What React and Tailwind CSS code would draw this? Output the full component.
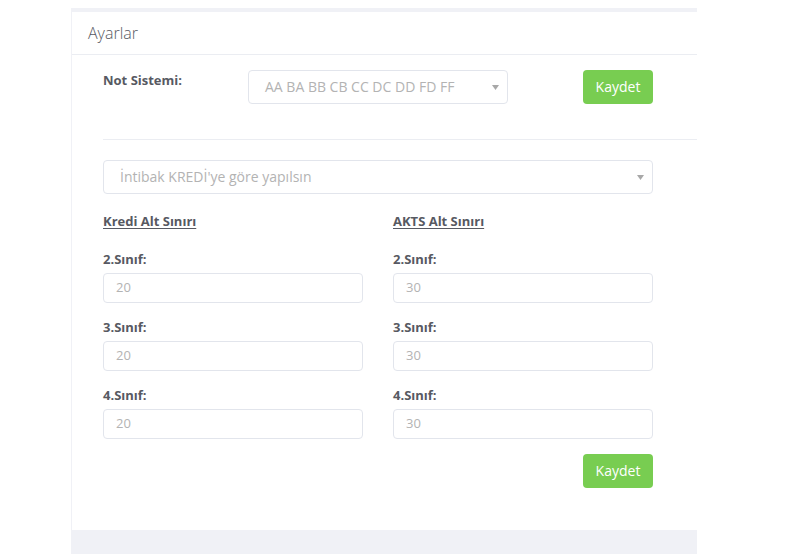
import React from "react";

const font = { fontFamily: '"Open Sans", "Noto Sans", sans-serif' };

function Arrow() {
  return (
    <svg width="7" height="5" viewBox="0 0 7 5" className="shrink-0">
      <path d="M0 0 L7 0 L3.5 5 Z" fill="#a8a8a8" />
    </svg>
  );
}

function Select({ text, className }) {
  return (
    <div
      className={`flex items-center justify-between h-[34px] border border-[#e2e5ec] rounded-[4px] pl-[16px] pr-[8px] ${className}`}
    >
      <span className="text-[14px] text-[#b3b3b3] leading-none">{text}</span>
      <Arrow />
    </div>
  );
}

function Button() {
  return (
    <div className="w-[70px] h-[34px] rounded-[4px] bg-[#78cd51] flex items-center justify-center text-white text-[14px] leading-none">
      Kaydet
    </div>
  );
}

function Field({ label, value }) {
  return (
    <div className="flex flex-col">
      <div className="text-[13px] font-bold text-[#575962] leading-[18px]">{label}</div>
      <div className="mt-[5px] h-[30px] border border-[#e2e5ec] rounded-[4px] flex items-center pl-[12px] text-[13px] text-[#b3b3b3]">
        {value}
      </div>
    </div>
  );
}

export default function App() {
  return (
    <div style={font} className="bg-white h-[554px] w-[791px] pt-[8px] pl-[71px] overflow-hidden">
      <div className="w-[626px] h-[546px] bg-[#f0f1f6] pt-[4px] pl-[1px]">
        <div className="bg-white h-[518px] w-[625px]">
          <div className="h-[43px] border-b border-[#ebedf2] flex items-center pl-[16px]">
            <span className="text-[16px] font-light text-[#575962]">Ayarlar</span>
          </div>
          <div className="pl-[31px] pt-[15px]">
            <div className="flex items-start">
              <div className="w-[145px] pt-[1px] text-[13px] font-bold text-[#575962] leading-[18px]">
                Not Sistemi:
              </div>
              <Select text="AA BA BB CB CC DC DD FD FF" className="w-[260px]" />
              <div className="ml-[75px]">
                <Button />
              </div>
            </div>
            <div className="mt-[35px] border-t border-[#ebedf2]" />
            <Select text="İntibak KREDİ'ye göre yapılsın" className="mt-[20px] w-[550px]" />
            <div className="mt-[18px] grid grid-cols-[260px_260px] gap-x-[30px]">
              <div className="text-[13px] font-bold text-[#575962] leading-[18px] underline underline-offset-2">
                Kredi Alt Sınırı
              </div>
              <div className="text-[13px] font-bold text-[#575962] leading-[18px] underline underline-offset-2">
                AKTS Alt Sınırı
              </div>
            </div>
            <div className="mt-[20px] grid grid-cols-[260px_260px] gap-x-[30px] gap-y-[15px]">
              <Field label="2.Sınıf:" value="20" />
              <Field label="2.Sınıf:" value="30" />
              <Field label="3.Sınıf:" value="20" />
              <Field label="3.Sınıf:" value="30" />
              <Field label="4.Sınıf:" value="20" />
              <Field label="4.Sınıf:" value="30" />
            </div>
            <div className="mt-[15px] pl-[480px]">
              <Button />
            </div>
          </div>
        </div>
      </div>
    </div>
  );
}
